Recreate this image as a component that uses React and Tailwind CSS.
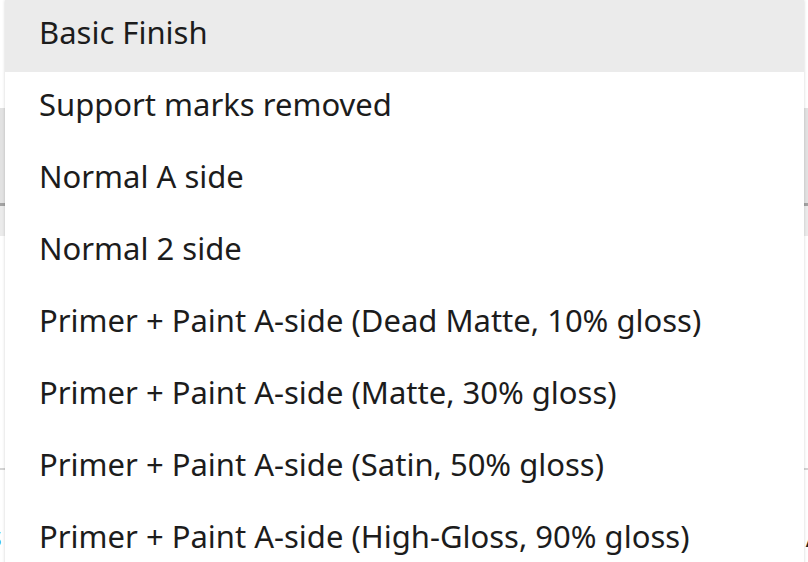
const options = [
  "Basic Finish",
  "Support marks removed",
  "Normal A side",
  "Normal 2 side",
  "Primer + Paint A-side (Dead Matte, 10% gloss)",
  "Primer + Paint A-side (Matte, 30% gloss)",
  "Primer + Paint A-side (Satin, 50% gloss)",
  "Primer + Paint A-side (High-Gloss, 90% gloss)",
];

export default function App() {
  const selected = "Basic Finish";

  return (
    <div
      className="relative h-[562px] w-[808px] overflow-hidden bg-white"
      style={{ fontFamily: '"Noto Sans", "Open Sans", sans-serif' }}
    >
      {/* page behind the open menu */}
      <div className="flex flex-col">
        <div className="h-[108px] bg-white" />
        <div className="h-[95px] bg-[#e2e2e2]" />
        <div className="h-[3px] bg-[#a3a3a3]" />
        <div className="h-[30px] bg-[#ebebeb]" />
        <div className="h-[232px] bg-white" />
        <div className="h-[2px] bg-[#d4d4d4]" />
        <div className="flex h-[92px] items-end justify-between pb-[12px] text-[28px] leading-none">
          <span className="-ml-[12px] font-semibold text-[#2b9bd8]">s</span>
          <span className="-mr-[8px] text-[#222]">/</span>
        </div>
      </div>

      {/* dropdown */}
      <ul className="absolute left-[5px] top-0 w-[799px] bg-white shadow-[0_0_3px_rgba(0,0,0,0.18)]">
        {options.map((opt) => (
          <li
            key={opt}
            className={`flex h-[72px] items-center pb-[8px] pl-[34px] text-[31px] leading-none text-[#1c1c1c] ${
              opt === selected ? "bg-[#ebebeb]" : "bg-white"
            }`}
          >
            {opt}
          </li>
        ))}
      </ul>
    </div>
  );
}
